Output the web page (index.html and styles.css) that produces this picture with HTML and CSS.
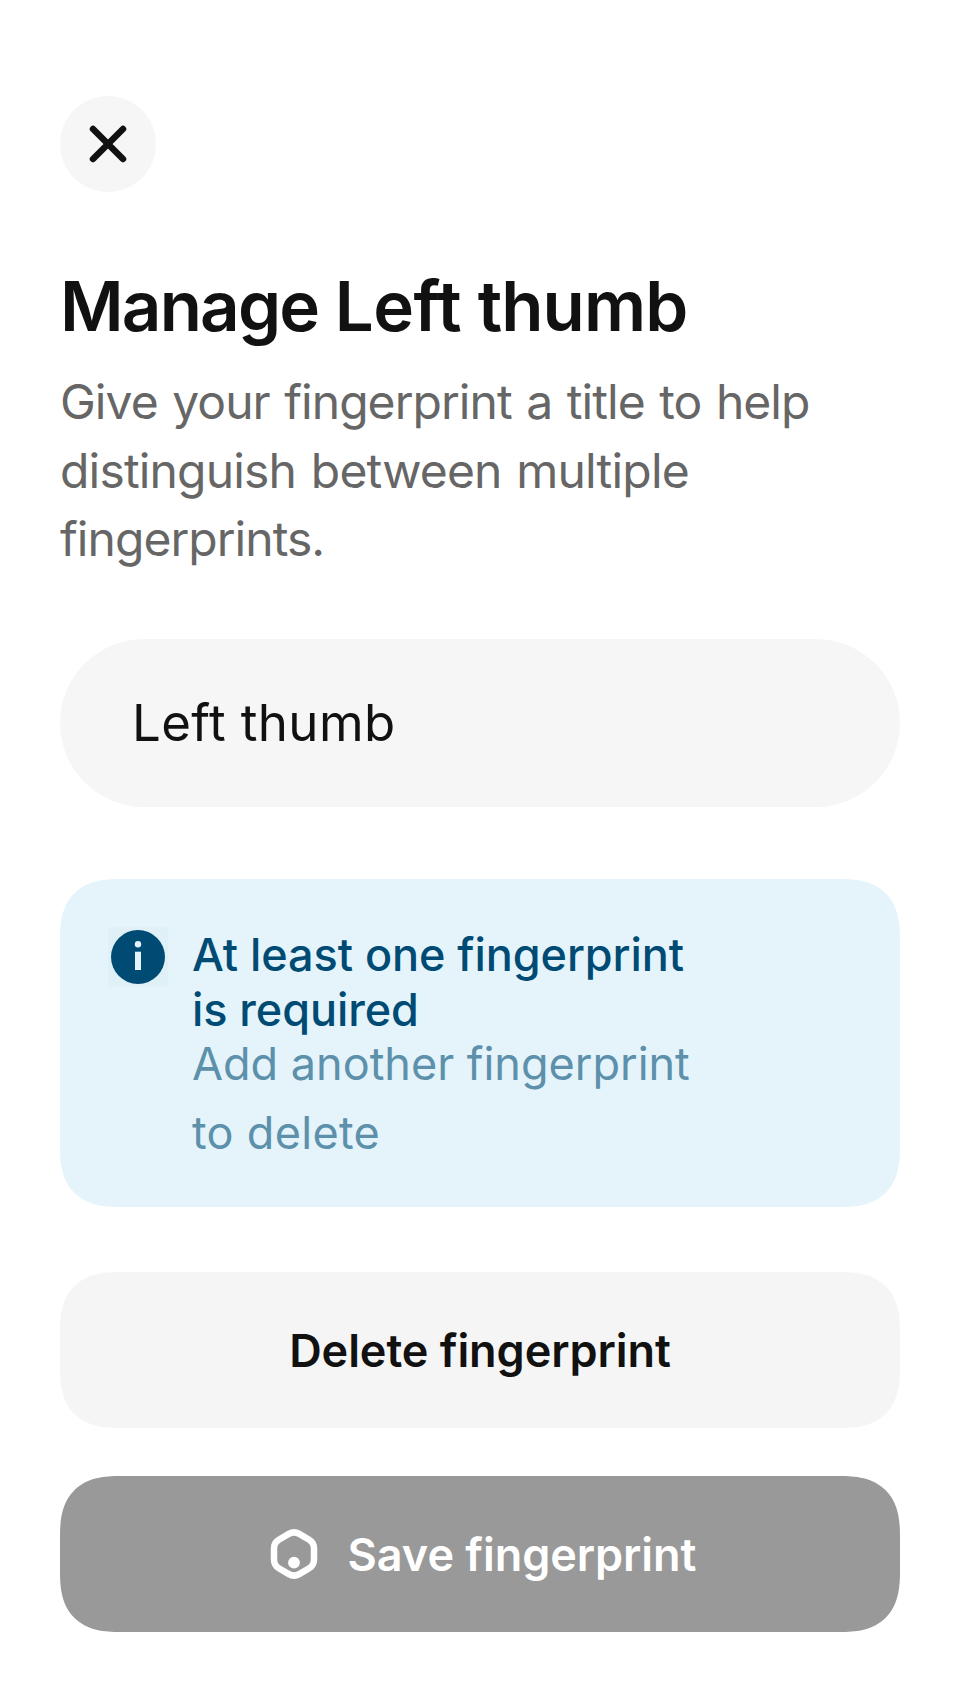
FILE: index.html
```html
<!DOCTYPE html>
<html lang="en">
<head>
<meta charset="utf-8">
<title>Manage Left thumb</title>
<link rel="stylesheet" href="styles.css">
</head>
<body>
<main class="screen">
  <button class="close" aria-label="Close">
    <svg width="38" height="38" viewBox="-19 -19 38 38" fill="none" stroke="currentColor" stroke-width="6.5" stroke-linecap="round"><path d="M-15 -15l30 30M15 -15l-30 30"/></svg>
  </button>
  <h1 class="title"><span class="title-tight">Manage</span> <span class="title-loose">Left</span> <span>thumb</span></h1>
  <p class="intro">Give your fingerprint a title to help<br><span class="intro-loose">distinguish between multiple</span><br>fingerprints.</p>
  <div class="field"><span>Left thumb</span></div>
  <section class="notice">
    <svg class="notice-icon" width="60" height="60" viewBox="0 0 60 60"><circle cx="30" cy="30" r="27" fill="#004b74"/><circle cx="30" cy="17.2" r="3.2" fill="#e5f4fb"/><path d="M27 24.7h6V43h-6z" fill="#e5f4fb"/></svg>
    <div class="notice-body">
      <p class="notice-title">At least one fingerprint<br>is required</p>
      <p class="notice-text">Add another fingerprint<br><span class="notice-loose">to delete</span></p>
    </div>
  </section>
  <button class="button button-delete"><span>Delete fingerprint</span></button>
  <button class="button button-save">
    <svg class="save-icon" width="60" height="60" viewBox="-30 -30 60 60"><path d="M-5.2 -20.1Q0 -23.1 5.2 -20.1L14.8 -14.55Q20 -11.55 20 -5.5V5.5Q20 11.55 14.8 14.55L5.2 20.1Q0 23.1 -5.2 20.1L-14.8 14.55Q-20 11.55 -20 5.5V-5.5Q-20 -11.55 -14.8 -14.55Z" fill="none" stroke="#fff" stroke-width="6.5"/><circle cx="0" cy="8.7" r="5.9" fill="#fff"/></svg>
    <span>Save fingerprint</span>
  </button>
</main>
</body>
</html>
```
FILE: styles.css
```css
* { box-sizing: border-box; }
body { margin: 0; background: #fff; color: #111; font-family: Inter, "Liberation Sans", sans-serif; }
h1, p { margin: 0; }
button { border: 0; padding: 0; font: inherit; color: inherit; }

.screen { display: flex; flex-direction: column; width: 960px; height: 1704px; padding: 96px 60px 72px; }
.close { display: flex; align-items: center; justify-content: center; width: 96px; height: 96px; border-radius: 50%; background: #f6f6f6; }
.title { margin-top: 72px; font-size: 69px; line-height: 84px; font-weight: 600; letter-spacing: -0.9px; white-space: nowrap; }
.title-tight { letter-spacing: -1.8px; }
.title-loose { letter-spacing: -0.5px; }
.intro { height: 206px; margin-top: 20px; font-size: 48px; line-height: 68.5px; letter-spacing: -0.95px; word-spacing: 2px; color: #666; white-space: nowrap; }
.intro-loose { letter-spacing: -0.82px; }
.field { display: flex; align-items: center; height: 168px; margin-top: 65px; padding: 0 72px; border-radius: 84px; background: #f6f6f6; font-size: 51px; line-height: 62px; letter-spacing: 0.4px; }

.notice { display: flex; gap: 24px; height: 328px; margin-top: 72px; padding: 48px; border-radius: 50px; background: #e5f4fb; font-size: 45px; }
.notice-icon { flex: none; background: #e0f0f7; }
.notice-body { padding-top: 1px; }
.notice-title { font-weight: 500; line-height: 54.5px; letter-spacing: -0.07px; color: #004b74; white-space: nowrap; }
.notice-text { margin-top: -8.5px; line-height: 69px; color: #5c90ab; white-space: nowrap; }
.notice-loose { letter-spacing: 0.3px; }

.button { display: flex; align-items: center; justify-content: center; height: 156px; border-radius: 50px; font-size: 45px; line-height: 54px; font-weight: 600; letter-spacing: -0.05px; }
.button span { padding-top: 2px; }
.button-delete { margin-top: 65px; background: #f5f5f5; }
.button-save { gap: 24px; margin-top: 48px; background: #999; color: #fff; }

@supports (corner-shape: superellipse(1.35)) {
  .notice, .button { border-radius: 60px; corner-shape: superellipse(1.35); }
}
```
